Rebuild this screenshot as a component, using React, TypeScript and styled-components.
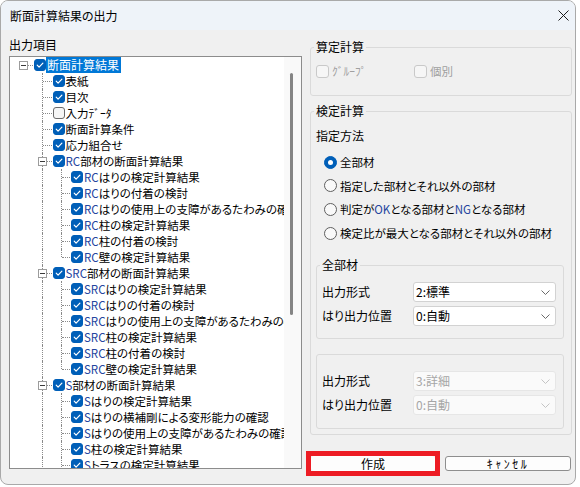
import React from "react";
import styled, { createGlobalStyle } from "styled-components";

type TreeNode = {
  label: string;
  checked?: boolean;
  selected?: boolean;
  more?: boolean;
  children?: TreeNode[];
};

type TreeRow = {
  node: TreeNode;
  guides: boolean[];
  hasParent: boolean;
  last: boolean;
};

const tree: TreeNode[] = [
  {
    label: "断面計算結果",
    checked: true,
    selected: true,
    children: [
      { label: "表紙", checked: true },
      { label: "目次", checked: true },
      { label: "入力ﾃﾞｰﾀ", checked: false },
      { label: "断面計算条件", checked: true },
      { label: "応力組合せ", checked: true },
      {
        label: "RC部材の断面計算結果",
        checked: true,
        children: [
          { label: "RCはりの検定計算結果", checked: true },
          { label: "RCはりの付着の検討", checked: true },
          { label: "RCはりの使用上の支障があるたわみの確認", checked: true },
          { label: "RC柱の検定計算結果", checked: true },
          { label: "RC柱の付着の検討", checked: true },
          { label: "RC壁の検定計算結果", checked: true }
        ]
      },
      {
        label: "SRC部材の断面計算結果",
        checked: true,
        children: [
          { label: "SRCはりの検定計算結果", checked: true },
          { label: "SRCはりの付着の検討", checked: true },
          { label: "SRCはりの使用上の支障があるたわみの確認", checked: true },
          { label: "SRC柱の検定計算結果", checked: true },
          { label: "SRC柱の付着の検討", checked: true },
          { label: "SRC壁の検定計算結果", checked: true }
        ]
      },
      {
        label: "S部材の断面計算結果",
        checked: true,
        more: true,
        children: [
          { label: "Sはりの検定計算結果", checked: true },
          { label: "Sはりの横補剛による変形能力の確認", checked: true },
          { label: "Sはりの使用上の支障があるたわみの確認", checked: true },
          { label: "S柱の検定計算結果", checked: true },
          { label: "Sトラスの検定計算結果", checked: true, more: true }
        ]
      }
    ]
  }
];

// flatten the tree into rows, keeping track of which guide lines to draw
const flatten = (
  nodes: TreeNode[],
  guides: boolean[],
  hasParent: boolean
): TreeRow[] =>
  nodes.flatMap((node, i) => {
    const last = i === nodes.length - 1 && !node.more;
    const row: TreeRow = { node, guides, hasParent, last };
    const kids = node.children
      ? flatten(node.children, [...guides, hasParent && !last], true)
      : [];
    return [row, ...kids];
  });

const rows = flatten(tree, [], false);

const methods = [
  "全部材",
  "指定した部材とそれ以外の部材",
  "判定がOKとなる部材とNGとなる部材",
  "検定比が最大となる部材とそれ以外の部材"
];

const withLatin = (text: string) =>
  text
    .split(/([A-Za-z]+)/)
    .map((part, i) =>
      /^[A-Za-z]+$/.test(part) ? <Latin key={i}>{part}</Latin> : part
    );

const CheckMark = () => (
  <svg width="10" height="10" viewBox="0 0 10 10">
    <polyline
      points="2.2,5.2 4.1,7.1 7.9,3.1"
      fill="none"
      stroke="#ffffff"
      strokeWidth="1.2"
      strokeLinecap="round"
      strokeLinejoin="round"
    />
  </svg>
);

const Chevron = ({ disabled }: { disabled?: boolean }) => (
  <svg width="9" height="5" viewBox="0 0 9 5">
    <polyline
      points="0.5,0.5 4.5,4.5 8.5,0.5"
      fill="none"
      stroke={disabled ? "#c4c4c4" : "#6a6a6a"}
      strokeWidth="1"
    />
  </svg>
);

const App = () => {
  return (
    <>
      <GlobalStyle />
      <Window>
        <TitleBar>
          <span>断面計算結果の出力</span>
          <svg width="11" height="11" viewBox="0 0 11 11">
            <path d="M0.5 0.5 L10.5 10.5 M10.5 0.5 L0.5 10.5" stroke="#1b1b1b" strokeWidth="1" />
          </svg>
        </TitleBar>
        <Body>
          <LeftColumn>
            <SectionLabel>出力項目</SectionLabel>
            <TreeBox>
              <TreeList>
                {rows.map((row, i) => (
                  <Row key={i}>
                    {row.guides.map((line, g) => (
                      <Guide key={g} $line={line} />
                    ))}
                    <Connector $up={row.hasParent} $down={!row.last}>
                      {row.node.children && <Expander />}
                    </Connector>
                    <TreeCheck $checked={!!row.node.checked}>
                      {row.node.checked && <CheckMark />}
                    </TreeCheck>
                    <TreeText $selected={!!row.node.selected}>
                      {withLatin(row.node.label)}
                    </TreeText>
                  </Row>
                ))}
              </TreeList>
              <ScrollTrack>
                <ScrollThumb />
              </ScrollTrack>
            </TreeBox>
          </LeftColumn>

          <RightColumn>
            <CalcGroup>
              <GroupTitle>算定計算</GroupTitle>
              <OptionRow>
                <OptionItem>
                  <DisabledBox />
                  <span>ｸﾞﾙｰﾌﾟ</span>
                </OptionItem>
                <OptionItem>
                  <DisabledBox />
                  <span>個別</span>
                </OptionItem>
              </OptionRow>
            </CalcGroup>

            <CheckGroup>
              <GroupTitle>検定計算</GroupTitle>
              <MethodLabel>指定方法</MethodLabel>
              <RadioList>
                {methods.map((m, i) => (
                  <RadioRow key={m}>
                    <Radio $checked={i === 0} />
                    <span>{withLatin(m)}</span>
                  </RadioRow>
                ))}
              </RadioList>

              <SettingsGroup>
                <GroupTitle>全部材</GroupTitle>
                <Fields>
                  <FieldLabel>出力形式</FieldLabel>
                  <Select>
                    <span>2:標準</span>
                    <Chevron />
                  </Select>
                  <FieldLabel>はり出力位置</FieldLabel>
                  <Select>
                    <span>0:自動</span>
                    <Chevron />
                  </Select>
                </Fields>
              </SettingsGroup>

              <OtherGroup>
                <Fields>
                  <FieldLabel>出力形式</FieldLabel>
                  <Select $disabled>
                    <span>3:詳細</span>
                    <Chevron disabled />
                  </Select>
                  <FieldLabel>はり出力位置</FieldLabel>
                  <Select $disabled>
                    <span>0:自動</span>
                    <Chevron disabled />
                  </Select>
                </Fields>
              </OtherGroup>
            </CheckGroup>

            <ButtonRow>
              <Highlight>
                <Button $default>作成</Button>
              </Highlight>
              <CancelButton>ｷｬﾝｾﾙ</CancelButton>
            </ButtonRow>
          </RightColumn>
        </Body>
      </Window>
    </>
  );
};

const GlobalStyle = createGlobalStyle`
  html, body {
    margin: 0;
    padding: 0;
    background: #ffffff;
  }
  body {
    font-family: "Noto Sans CJK JP", "Noto Sans", sans-serif;
    font-size: 11.5px;
    font-feature-settings: "palt";
    color: #000000;
  }
  * {
    box-sizing: border-box;
  }
`;

const Window = styled.div`
  width: 576px;
  height: 485px;
  border: 1px solid #a9a9a9;
  border-radius: 8px;
  overflow: hidden;
  background: #f0f0f0;
  display: flex;
  flex-direction: column;
`;

const TitleBar = styled.div`
  height: 29px;
  flex: none;
  background: #eef3f9;
  display: flex;
  align-items: center;
  justify-content: space-between;
  padding: 0 6px 0 9px;
  line-height: 16px;
  font-size: 12px;
`;

const Body = styled.div`
  display: grid;
  grid-template-columns: 293px 262px;
  column-gap: 8px;
  padding: 7px 0 0 8px;
`;

const LeftColumn = styled.div`
  display: flex;
  flex-direction: column;
`;

const SectionLabel = styled.div`
  line-height: 16px;
  font-size: 12px;
`;

const TreeBox = styled.div`
  margin-top: 3px;
  height: 413px;
  border: 1px solid #8c8c8c;
  background: #ffffff;
  display: flex;
`;

const TreeList = styled.div`
  flex: 1;
  min-width: 0;
  overflow: hidden;
  white-space: nowrap;
`;

const Row = styled.div`
  display: flex;
  align-items: center;
  height: 16px;
  padding-left: 5.5px;
`;

const Guide = styled.span<{ $line: boolean }>`
  position: relative;
  flex: none;
  width: 18.5px;
  height: 16px;
  &::before {
    content: "";
    display: ${(p) => (p.$line ? "block" : "none")};
    position: absolute;
    left: 8px;
    top: 0;
    bottom: 0;
    border-left: 1px dotted #8a8a8a;
  }
`;

const Connector = styled.span<{ $up: boolean; $down: boolean }>`
  position: relative;
  flex: none;
  width: 18.5px;
  height: 16px;
  &::before {
    content: "";
    display: ${(p) => (p.$up || p.$down ? "block" : "none")};
    position: absolute;
    left: 8px;
    top: ${(p) => (p.$up ? "0" : "8px")};
    bottom: ${(p) => (p.$down ? "0" : "8px")};
    border-left: 1px dotted #8a8a8a;
  }
  &::after {
    content: "";
    position: absolute;
    left: 9px;
    right: 1px;
    top: 8px;
    border-top: 1px dotted #8a8a8a;
  }
`;

const Expander = styled.span`
  position: absolute;
  z-index: 1;
  left: 3.5px;
  top: 3.5px;
  width: 9px;
  height: 9px;
  border: 1px solid #9c9c9c;
  background: #ffffff;
  &::after {
    content: "";
    position: absolute;
    left: 1px;
    right: 1px;
    top: 3px;
    height: 1px;
    background: #3a3a3a;
  }
`;

const TreeCheck = styled.span<{ $checked: boolean }>`
  flex: none;
  width: 12px;
  height: 12px;
  border-radius: 3px;
  display: flex;
  align-items: center;
  justify-content: center;
  background: ${(p) => (p.$checked ? "#005fb8" : "#f6f6f6")};
  border: 1px solid ${(p) => (p.$checked ? "#005fb8" : "#6b6b6b")};
`;

const TreeText = styled.span<{ $selected: boolean }>`
  padding: 0 2px 0 1px;
  line-height: 16px;
  height: 16px;
  font-size: ${(p) => (p.$selected ? "12px" : "11.5px")};
  background: ${(p) => (p.$selected ? "#0078d7" : "transparent")};
  color: ${(p) => (p.$selected ? "#ffffff" : "#000000")};
`;

const Latin = styled.span`
  color: #24449e;
`;

const ScrollTrack = styled.div`
  flex: none;
  width: 17px;
  background: #f9f9f9;
  padding: 16px 0 0 6px;
`;

const ScrollThumb = styled.div`
  width: 3px;
  height: 242px;
  border-radius: 2px;
  background: #858585;
`;

const RightColumn = styled.div`
  display: flex;
  flex-direction: column;
`;

const Group = styled.div`
  border: 1px solid #dadada;
  border-radius: 3px;
`;

const GroupTitle = styled.div`
  width: fit-content;
  margin: -9px 0 0 3px;
  padding: 0 2px;
  line-height: 16px;
  font-size: 12px;
  background: #f0f0f0;
`;

const CalcGroup = styled(Group)`
  margin-top: 10px;
  height: 49px;
`;

const OptionRow = styled.div`
  display: grid;
  grid-template-columns: 98px auto;
  margin: 8px 0 0 5px;
  color: #a0a0a0;
  line-height: 16px;
`;

const OptionItem = styled.label`
  display: flex;
  align-items: center;
  gap: 3px;
`;

const DisabledBox = styled.span`
  width: 13px;
  height: 13px;
  border-radius: 3px;
  border: 1px solid #c9c9c9;
  background: #f6f6f6;
`;

const CheckGroup = styled(Group)`
  margin-top: 15px;
  height: 324px;
`;

const MethodLabel = styled.div`
  margin: 9px 0 0 5px;
  line-height: 16px;
  font-size: 12px;
`;

const RadioList = styled.div`
  display: flex;
  flex-direction: column;
  gap: 7.7px;
  margin: 10px 0 0 13px;
`;

const RadioRow = styled.label`
  display: flex;
  align-items: center;
  gap: 3px;
  line-height: 16px;
  white-space: nowrap;
`;

const Radio = styled.span<{ $checked: boolean }>`
  flex: none;
  width: 13px;
  height: 13px;
  border-radius: 50%;
  background: ${(p) => (p.$checked ? "#005fb8" : "#f9f9f9")};
  border: 1px solid ${(p) => (p.$checked ? "#005fb8" : "#5f5f5f")};
  display: flex;
  align-items: center;
  justify-content: center;
  &::after {
    content: "";
    display: ${(p) => (p.$checked ? "block" : "none")};
    width: 5px;
    height: 5px;
    border-radius: 50%;
    background: #ffffff;
  }
`;

const SettingsGroup = styled(Group)`
  margin: 24px 7px 0 5px;
  height: 74px;
`;

const OtherGroup = styled(Group)`
  margin: 15px 7px 0 5px;
  height: 75px;
  padding-top: 16px;
`;

const Fields = styled.div`
  display: grid;
  grid-template-columns: 91px 143px;
  row-gap: 4px;
  align-items: center;
  margin: 9px 0 0 5px;
  ${OtherGroup} & {
    margin-top: 0;
  }
`;

const FieldLabel = styled.span`
  line-height: 16px;
  font-size: 12px;
`;

const Select = styled.div<{ $disabled?: boolean }>`
  height: 20px;
  border: 1px solid ${(p) => (p.$disabled ? "#e6e6e6" : "#d2d2d2")};
  border-radius: 3px;
  background: ${(p) => (p.$disabled ? "#fafafa" : "#ffffff")};
  color: ${(p) => (p.$disabled ? "#a6a6a6" : "#000000")};
  display: flex;
  align-items: center;
  justify-content: space-between;
  padding: 0 5px 0 2px;
  line-height: 16px;
  font-size: 12px;
`;

const ButtonRow = styled.div`
  display: flex;
  align-items: center;
  margin-top: 16px;
`;

const Highlight = styled.div`
  margin-left: -4px;
  width: 134px;
  height: 25px;
  border: 5px solid #ed1c24;
`;

const Button = styled.button<{ $default?: boolean }>`
  width: 100%;
  height: 100%;
  padding: 0;
  font: inherit;
  font-size: 12px;
  line-height: 13px;
  color: #000000;
  background: #fdfdfd;
  border: 1px solid ${(p) => (p.$default ? "#ffffff" : "#8e8e8e")};
  border-radius: 3px;
`;

const CancelButton = styled(Button)`
  margin-left: 5px;
  width: 126px;
  height: 15px;
  letter-spacing: 2.5px;
`;

export default App;
